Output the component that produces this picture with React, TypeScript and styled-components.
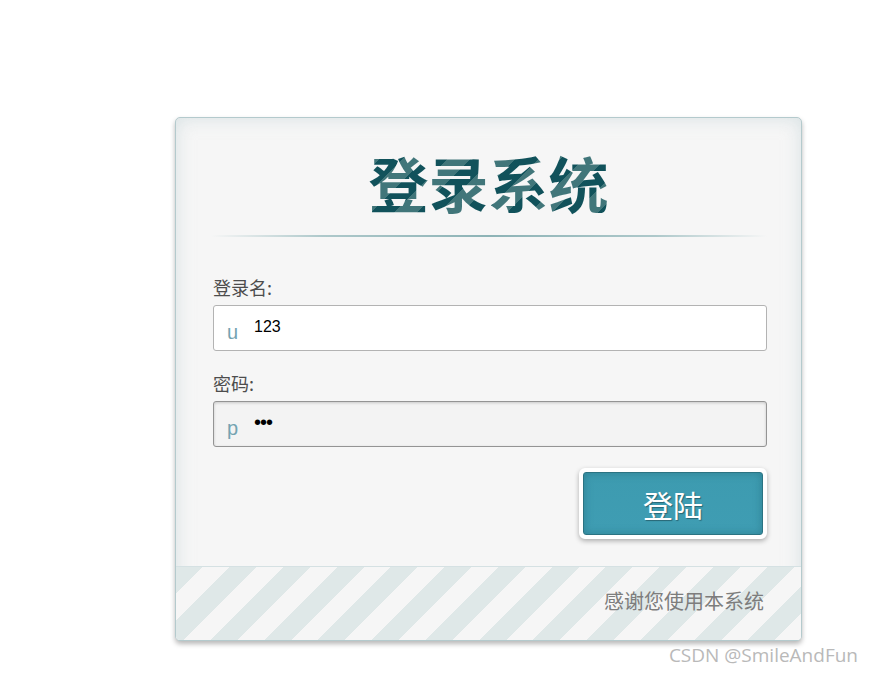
import React from "react";
import styled, { createGlobalStyle } from "styled-components";

const Global = createGlobalStyle`
  html, body { margin: 0; padding: 0; background: #ffffff; }
  body { font-family: "Noto Sans CJK SC", "Noto Sans", sans-serif; }
  * { box-sizing: border-box; }
`;

const Page = styled.div`
  position: relative;
  width: 872px;
  height: 674px;
  padding: 117px 0 0 175px;
`;

const Card = styled.div`
  width: 627px;
  height: 524px;
  display: flex;
  flex-direction: column;
  border: 1px solid #b4cacd;
  border-radius: 5px;
  background: #f6f6f6;
  box-shadow: 0 3px 5px rgba(0, 0, 0, 0.28), inset 0 0 18px rgba(190, 208, 212, 0.55);
  overflow: hidden;
`;

const Header = styled.div`
  height: 120px;
  display: flex;
  flex-direction: column;
  align-items: center;
  padding-top: 29px;
`;

const Title = styled.h1`
  margin: 0;
  font-family: "Noto Sans CJK SC", sans-serif;
  font-weight: 700;
  font-size: 60px;
  line-height: 70px;
  letter-spacing: 0;
  background: repeating-linear-gradient(
    135deg,
    #41767a 0 16px,
    #11525b 16px 32px
  );
  -webkit-background-clip: text;
  background-clip: text;
  color: transparent;
`;

const Divider = styled.div`
  margin-top: 18px;
  width: 556px;
  height: 2px;
  background: linear-gradient(
    to right,
    rgba(143, 181, 184, 0) 0%,
    rgba(143, 181, 184, 0.7) 20%,
    #8db3b6 50%,
    rgba(143, 181, 184, 0.7) 80%,
    rgba(143, 181, 184, 0) 100%
  );
`;

const Form = styled.div`
  display: flex;
  flex-direction: column;
  padding: 0 34px 0 37px;
`;

const Label = styled.label<{ $top: number }>`
  margin-top: ${(p) => p.$top}px;
  height: 26px;
  line-height: 26px;
  font-size: 18px;
  color: #4d4d4d;
`;

const Field = styled.div<{ $active?: boolean }>`
  margin-top: 5px;
  height: 46px;
  display: flex;
  align-items: stretch;
  border: 1px solid ${(p) => (p.$active ? "#949494" : "#b3b3b3")};
  border-radius: 3px;
  background: ${(p) => (p.$active ? "#f3f3f3" : "#ffffff")};
  box-shadow: ${(p) => (p.$active ? "inset 0 1px 3px rgba(0,0,0,0.18)" : "none")};
`;

const Prefix = styled.span`
  width: 40px;
  padding: 0 0 0 13px;
  display: flex;
  align-items: flex-end;
  padding-bottom: 6px;
  font-family: "Liberation Sans", Arial, sans-serif;
  font-size: 20px;
  color: #74a3b1;
`;

const Value = styled.span<{ $dots?: boolean }>`
  display: flex;
  align-items: center;
  padding-bottom: ${(p) => (p.$dots ? "3px" : "2px")};
  font-family: "Liberation Sans", Arial, sans-serif;
  font-size: ${(p) => (p.$dots ? "20px" : "16px")};
  color: #000;
  letter-spacing: ${(p) => (p.$dots ? "-1px" : "0")};
`;

const Actions = styled.div`
  margin-top: 21px;
  display: flex;
  justify-content: flex-end;
`;

const Button = styled.button`
  width: 188px;
  height: 71px;
  padding: 0;
  border: 4px solid #ffffff;
  border-radius: 6px;
  background: #ffffff;
  box-shadow: 0 2px 5px rgba(0, 0, 0, 0.3);
  cursor: pointer;
  display: flex;
`;

const ButtonFace = styled.span`
  flex: 1;
  display: flex;
  align-items: center;
  justify-content: center;
  border: 1px solid #2b7382;
  border-radius: 3px;
  background: linear-gradient(to bottom, #3d9bb0, #3f9db3);
  box-shadow: inset 0 0 8px rgba(20, 80, 95, 0.35);
  color: #ffffff;
  font-family: "Noto Sans CJK SC", sans-serif;
  font-size: 30px;
  text-shadow: 1px 1px 1px rgba(0, 0, 0, 0.35);
`;

const Footer = styled.div`
  margin-top: auto;
  height: 74px;
  border-top: 1px solid #d5e1e3;
  display: flex;
  align-items: center;
  justify-content: flex-end;
  padding: 0 37px 6px 0;
  background-color: #f6f6f6;
  background-image: repeating-linear-gradient(
    135deg,
    #dfe8e8 0 19px,
    #f6f6f6 19px 38px
  );
`;

const FooterText = styled.span`
  font-size: 20px;
  line-height: 28px;
  color: #7d7d7d;
`;

const Watermark = styled.div`
  position: absolute;
  right: 14px;
  top: 642px;
  font-family: "Open Sans", sans-serif;
  font-size: 19px;
  line-height: 26px;
  color: #b9b9b9;
`;

export default function App() {
  return (
    <Page>
      <Global />
      <Card>
        <Header>
          <Title>登录系统</Title>
          <Divider />
        </Header>
        <Form>
          <Label $top={36}>登录名:</Label>
          <Field>
            <Prefix>u</Prefix>
            <Value>123</Value>
          </Field>
          <Label $top={19}>密码:</Label>
          <Field $active>
            <Prefix>p</Prefix>
            <Value $dots>•••</Value>
          </Field>
          <Actions>
            <Button type="button">
              <ButtonFace>登陆</ButtonFace>
            </Button>
          </Actions>
        </Form>
        <Footer>
          <FooterText>感谢您使用本系统</FooterText>
        </Footer>
      </Card>
      <Watermark>CSDN @SmileAndFun</Watermark>
    </Page>
  );
}
